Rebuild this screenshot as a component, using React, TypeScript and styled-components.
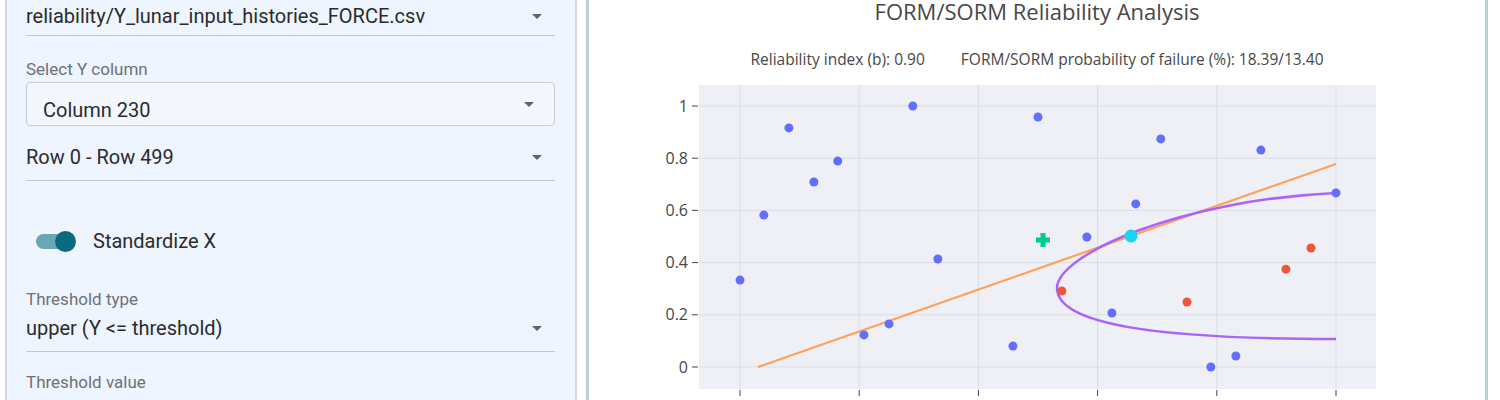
import React from "react";
import styled, { createGlobalStyle } from "styled-components";

const GlobalStyle = createGlobalStyle`
  html, body {
    margin: 0;
    padding: 0;
    background: #ffffff;
    overflow: hidden;
  }
  body {
    font-family: Roboto, "Liberation Sans", Arial, sans-serif;
  }
`;

// Layout
const Page = styled.div`
  display: flex;
  align-items: flex-start;
  gap: 9px;
  margin-top: -12px;
  padding-left: 5px;
  height: 412px;
  overflow: hidden;
`;

const Sidebar = styled.aside`
  box-sizing: border-box;
  width: 572px;
  height: 440px;
  padding: 10px 20px 0 19px;
  background: #eef5fe;
  border: 2px solid #d3d8dd;
  display: flex;
  flex-direction: column;
`;

const FieldLabel = styled.div<{ $top: number }>`
  margin-top: ${(p) => p.$top}px;
  font-size: 17px;
  line-height: 18px;
  color: #6d7175;
`;

const StandardSelect = styled.div<{ $top: number; $bottom: number }>`
  display: flex;
  align-items: center;
  justify-content: space-between;
  margin-top: ${(p) => p.$top}px;
  padding: 4px 6px ${(p) => p.$bottom}px 0;
  border-bottom: 1px solid #c4c8cc;
  font-size: 20px;
  line-height: 23px;
  color: #2b2b2b;
`;

const OutlinedSelect = styled.div`
  box-sizing: border-box;
  display: flex;
  align-items: center;
  justify-content: space-between;
  margin-top: 4px;
  height: 44px;
  padding: 12px 13px 0 16px;
  border: 1px solid #c9cdd2;
  border-radius: 4px;
  background: #f4f8fe;
  font-size: 20px;
  color: #2b2b2b;
`;

const Caret = styled.svg<{ $lift?: number }>`
  width: 24px;
  height: 24px;
  fill: #5f6368;
  flex-shrink: 0;
  margin-top: ${(p) => -(p.$lift ?? 0)}px;
`;

const SwitchRow = styled.div`
  display: flex;
  align-items: center;
  gap: 19px;
  margin-top: 41px;
  height: 38px;
  padding-left: 10px;
  font-size: 20px;
  color: #2b2b2b;
`;

const Track = styled.span<{ $on: boolean }>`
  position: relative;
  display: inline-block;
  width: 38px;
  height: 15px;
  border-radius: 8px;
  background: ${(p) => (p.$on ? "#6aa6b6" : "#b9b9b9")};
`;

const Thumb = styled.span<{ $on: boolean }>`
  position: absolute;
  top: -3px;
  left: ${(p) => (p.$on ? "19px" : "-3px")};
  width: 21px;
  height: 21px;
  border-radius: 50%;
  background: ${(p) => (p.$on ? "#0b6a80" : "#fafafa")};
`;

const ChartCard = styled.section`
  box-sizing: border-box;
  width: 902px;
  height: 440px;
  padding-top: 9px;
  border: 3px solid #bccdd8;
  background: #ffffff;
  font-family: "Open Sans", "DejaVu Sans", sans-serif;
  color: #474747;
`;

const ChartTitle = styled.div`
  text-align: center;
  font-size: 22px;
  line-height: 22px;
`;

const ChartSubtitle = styled.div`
  display: flex;
  justify-content: center;
  gap: 36px;
  margin-top: 29px;
  font-size: 15.5px;
  line-height: 16px;
`;

const Plot = styled.svg`
  display: block;
  margin-top: 11px;
`;

const ArrowDown: React.FC<{ lift?: number }> = ({ lift }) => (
  <Caret viewBox="0 0 24 24" $lift={lift}>
    <path d="M7 10l5 5 5-5z" />
  </Caret>
);

// chart data, normalised 0..1 on both axes
const safe: [number, number][] = [
  [0, 0.333], [0.04, 0.582], [0.082, 0.916], [0.124, 0.709], [0.164, 0.789],
  [0.208, 0.123], [0.25, 0.165], [0.29, 1.0], [0.332, 0.414], [0.458, 0.08],
  [0.5, 0.958], [0.582, 0.498], [0.624, 0.207], [0.664, 0.625], [0.706, 0.874],
  [0.79, 0], [0.832, 0.042], [0.874, 0.831], [1.0, 0.667],
];
const failed: [number, number][] = [
  [0.54, 0.291], [0.75, 0.249], [0.916, 0.375], [0.958, 0.456],
];

const px = (u: number) => 151 + 596 * u;
const py = (v: number) => 289 - 261 * v;

const ticks = [0, 0.2, 0.4, 0.6, 0.8, 1];

const ReliabilityChart: React.FC = () => {
  const cx = 454;
  const cy = 162;
  return (
    <Plot width={896} height={330}>
      <rect x={110} y={7} width={677} height={304} fill="#eef0f5" />
      {ticks.map((t) => (
        <line key={"v" + t} x1={px(t)} x2={px(t)} y1={7} y2={311} stroke="#dadde3" strokeWidth={1} />
      ))}
      {ticks.map((t) => (
        <line key={"h" + t} x1={110} x2={787} y1={py(t)} y2={py(t)} stroke="#dadde3" strokeWidth={1} />
      ))}
      {ticks.map((t) => (
        <g key={"y" + t}>
          <line x1={103} x2={109} y1={py(t)} y2={py(t)} stroke="#444" strokeWidth={1} />
          <text x={99} y={py(t) + 5.5} textAnchor="end" fontSize={16} fill="#474747">
            {t === 0 || t === 1 ? t : t.toFixed(1)}
          </text>
        </g>
      ))}
      {ticks.map((t) => (
        <line key={"x" + t} x1={px(t)} x2={px(t)} y1={312} y2={318} stroke="#444" strokeWidth={1} />
      ))}

      <line x1={px(0.03)} y1={py(0)} x2={px(1)} y2={py(0.778)} stroke="#ffa15a" strokeWidth={2.2} />
      <path
        d="M747,115 C590,122 468,177 468,210 C468,247 570,261 747,261"
        fill="none"
        stroke="#ab63fa"
        strokeWidth={2.5}
      />

      {safe.map(([u, v], i) => (
        <circle key={"s" + i} cx={px(u)} cy={py(v)} r={4.5} fill="#636efa" />
      ))}
      {failed.map(([u, v], i) => (
        <circle key={"f" + i} cx={px(u)} cy={py(v)} r={4.5} fill="#ef553b" />
      ))}

      <circle cx={542} cy={158} r={6.5} fill="#19d3f3" />
      <path
        d={`M${cx - 2.5},${cy - 7} h5 v4.5 h4.5 v5 h-4.5 v4.5 h-5 v-4.5 h-4.5 v-5 h4.5 z`}
        fill="#00cc96"
      />
    </Plot>
  );
};

const App: React.FC = () => {
  return (
    <>
      <GlobalStyle />
      <Page>
        <Sidebar>
          <StandardSelect $top={0} $bottom={7}>
            <span>reliability/Y_lunar_input_histories_FORCE.csv</span>
            <ArrowDown />
          </StandardSelect>

          <FieldLabel $top={24}>Select Y column</FieldLabel>
          <OutlinedSelect>
            <span>Column 230</span>
            <ArrowDown lift={12} />
          </OutlinedSelect>

          <StandardSelect $top={15} $bottom={11}>
            <span>Row 0 - Row 499</span>
            <ArrowDown />
          </StandardSelect>

          <SwitchRow>
            <Track $on>
              <Thumb $on />
            </Track>
            <span>Standardize X</span>
          </SwitchRow>

          <FieldLabel $top={30}>Threshold type</FieldLabel>
          <StandardSelect $top={4} $bottom={11}>
            <span>upper (Y &lt;= threshold)</span>
            <ArrowDown />
          </StandardSelect>

          <FieldLabel $top={21}>Threshold value</FieldLabel>
        </Sidebar>

        <ChartCard>
          <ChartTitle>FORM/SORM Reliability Analysis</ChartTitle>
          <ChartSubtitle>
            <span>Reliability index (b): 0.90</span>
            <span>FORM/SORM probability of failure (%): 18.39/13.40</span>
          </ChartSubtitle>
          <ReliabilityChart />
        </ChartCard>
      </Page>
    </>
  );
};

export default App;
